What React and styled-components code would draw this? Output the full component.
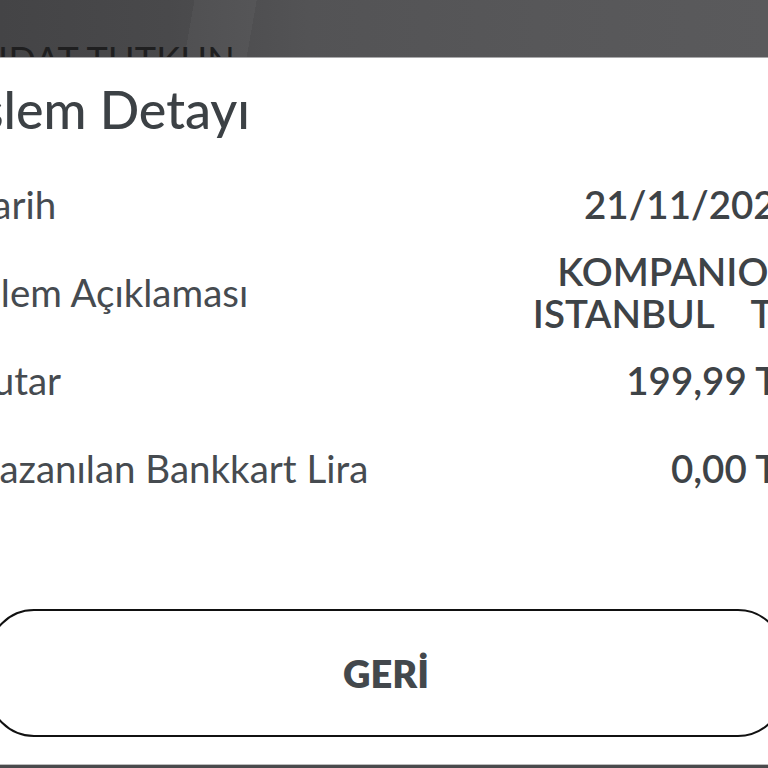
import styled, { createGlobalStyle } from 'styled-components';

const GlobalStyle = createGlobalStyle`
  html, body {
    margin: 0;
    padding: 0;
    overflow: hidden;
    background: #fff;
  }
  * {
    box-sizing: border-box;
  }
`;

const rows = [
  { label: 'Tarih', value: '21/11/2023' },
  { label: 'İşlem Açıklaması', value: 'KOMPANION\nISTANBUL    TR' },
  { label: 'Tutar', value: '199,99 TL' },
  { label: 'Kazanılan Bankkart Lira', value: '0,00 TL' },
];

const App = () => {
  return (
    <Page>
      <GlobalStyle />
      <TopBand>
        <BandName>IDAT TUTKUN</BandName>
      </TopBand>

      <Sheet>
        <Inner>
          <Title>İşlem Detayı</Title>

          <Rows>
            {rows.map(row => (
              <Row key={row.label}>
                <Label>{row.label}</Label>
                <Value>{row.value}</Value>
              </Row>
            ))}
          </Rows>

          <BackButton type="button">GERİ</BackButton>
        </Inner>
      </Sheet>

      <BottomBand />
    </Page>
  );
};

export default App;

const Page = styled.div`
  display: flex;
  flex-direction: column;

  width: 768px;
  height: 768px;
  overflow: hidden;

  font-family: Lato, 'Noto Sans', sans-serif;
  color: #3e4347;
`;

const TopBand = styled.div`
  display: flex;
  align-items: flex-end;

  height: 57px;
  flex-shrink: 0;
  overflow: hidden;

  background:
    linear-gradient(100deg, transparent 0 25%, rgba(255, 255, 255, 0.035) 25% 33%, transparent 33%),
    linear-gradient(90deg, #444446 0%, #49494b 22%, #535355 40%, #575759 70%, #5a5a5c 100%);
`;

const BandName = styled.div`
  margin: 0 0 -20px -2px;

  font-size: 36px;
  font-weight: 400;
  line-height: 36px;
  letter-spacing: 0.3px;
  color: #1f1f20;
  white-space: nowrap;
`;

const Sheet = styled.div`
  flex: 1;
  display: flex;
  flex-direction: column;

  border-top: 1px solid #a9a9ab;
  background: #fff;
`;

const Inner = styled.div`
  display: flex;
  flex-direction: column;

  width: 824px;
  margin-left: -26px;
  padding-top: 19px;
`;

const Title = styled.h1`
  margin: 0 0 0 -7px;

  font-size: 52px;
  font-weight: 500;
  line-height: 64px;
  color: #3c4145;
  white-space: nowrap;
`;

const Rows = styled.div`
  display: flex;
  flex-direction: column;

  margin-top: 19px;
`;

const Row = styled.div`
  display: flex;
  justify-content: space-between;
  align-items: center;

  min-height: 88px;
`;

const Label = styled.div`
  font-size: 38.5px;
  font-weight: 400;
  color: #464b50;
  white-space: nowrap;
`;

const Value = styled.div`
  font-size: 38.5px;
  font-weight: 600;
  line-height: 42px;
  text-align: right;
  color: #3e4347;
  white-space: pre;
`;

const BackButton = styled.button`
  display: flex;
  justify-content: center;
  align-items: center;

  height: 128px;
  margin: 97px 14px 0;

  border: 2.5px solid #111;
  border-radius: 46px;
  background: #fff;

  font-family: Lato, 'Noto Sans', sans-serif;
  font-size: 38px;
  font-weight: 800;
  color: #43484c;
  cursor: pointer;
`;

const BottomBand = styled.div`
  height: 4px;
  flex-shrink: 0;

  border-top: 1px solid #bdbdbd;
  background: #4a4a4c;
`;
